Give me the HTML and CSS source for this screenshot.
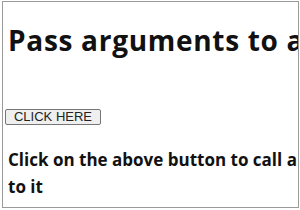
FILE: index.html
```html
<!DOCTYPE html>
<html>
<head>
<meta charset="utf-8">
<link rel="stylesheet" href="styles.css">
</head>
<body>
<div class="frame">
  <h1 class="title">Pass arguments to a function</h1>
  <button class="btn">CLICK HERE</button>
  <p class="note"><span class="line">Click on the above button to call a function and pass arguments</span> to it</p>
</div>
</body>
</html>
```
FILE: styles.css
```css
html, body {
  margin: 0;
  padding: 0;
  width: 300px;
  height: 210px;
  overflow: hidden;
  background: #ffffff;
}
.frame {
  box-sizing: border-box;
  margin: 1px 1px 0 2px;
  width: 297px;
  height: 207px;
  border: 1px solid #9a9a9a;
  padding: 0 0 0 2px;
  overflow: hidden;
  display: flex;
  flex-direction: column;
  align-items: flex-start;
}
.title {
  margin: 20px 0 0 3px;
  font-family: "Open Sans", "Noto Sans", sans-serif;
  font-weight: 700;
  font-size: 28px;
  letter-spacing: 0.7px;
  line-height: 36px;
  color: #111;
  white-space: nowrap;
}
.btn {
  margin: 51px 0 0 0;
  padding: 0 6px;
  font-family: "Liberation Sans", Arial, sans-serif;
  font-size: 13px;
  line-height: 14px;
  height: 16px;
  width: 96px;
  color: #222;
  background: #efefef;
  border: 1px solid #767676;
  border-radius: 2px;
}
.note {
  margin: 21px 0 0 3px;
  width: 287px;
  font-family: "Open Sans", "Noto Sans", sans-serif;
  font-weight: 700;
  font-size: 17px;
  line-height: 27px;
  color: #111;
}
.line {
  white-space: nowrap;
}
```
